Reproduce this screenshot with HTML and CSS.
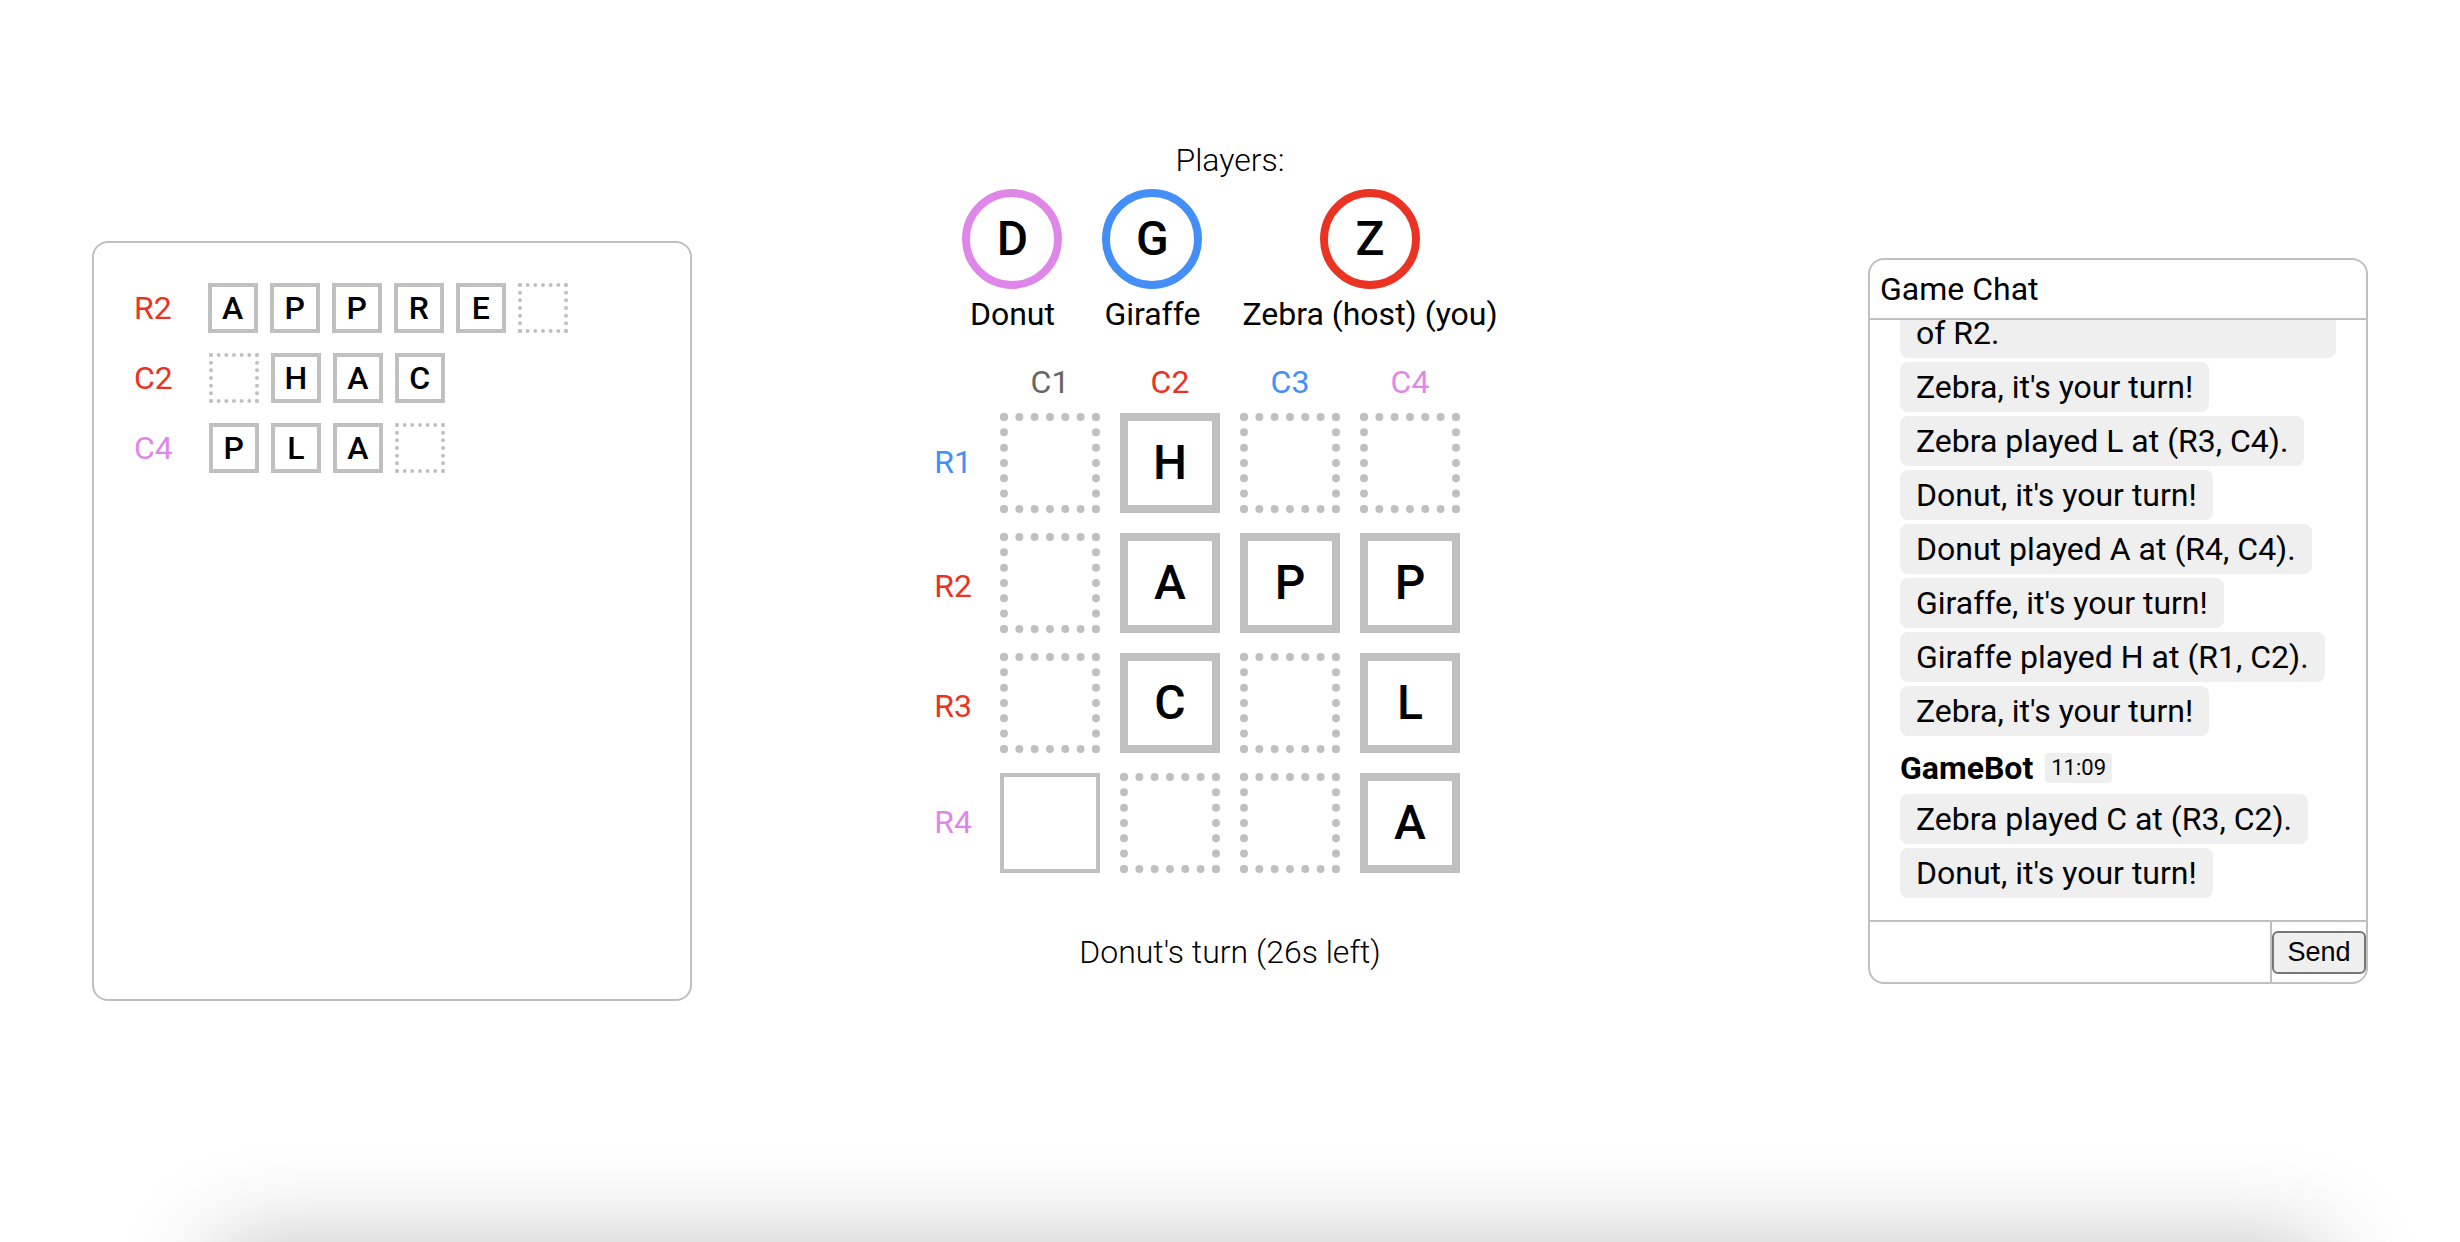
FILE: index.html
```html
<!DOCTYPE html>
<html lang="en">
<head>
<meta charset="utf-8">
<title>Word Grid</title>
<link rel="stylesheet" href="styles.css">
</head>
<body>
<main class="game">
  <section class="words" aria-label="Words">
    <div class="word">
      <span class="label red">R2</span>
      <span class="tile small">A</span><span class="tile small">P</span><span class="tile small">P</span><span class="tile small">R</span><span class="tile small">E</span><span class="tile small empty"></span>
    </div>
    <div class="word">
      <span class="label red">C2</span>
      <span class="tile small empty"></span><span class="tile small">H</span><span class="tile small">A</span><span class="tile small">C</span>
    </div>
    <div class="word">
      <span class="label violet">C4</span>
      <span class="tile small">P</span><span class="tile small">L</span><span class="tile small">A</span><span class="tile small empty"></span>
    </div>
  </section>

  <section class="table">
    <div class="caption">Players:</div>
    <div class="players">
      <div class="player"><span class="avatar violet"><span class="initial">D</span></span><span>Donut</span></div>
      <div class="player"><span class="avatar blue"><span class="initial">G</span></span><span>Giraffe</span></div>
      <div class="player"><span class="avatar red"><span class="initial">Z</span></span><span>Zebra (host) (you)</span></div>
    </div>
    <div class="board">
      <div class="columns">
        <span class="grey">C1</span><span class="red">C2</span><span class="blue">C3</span><span class="violet">C4</span>
      </div>
      <div class="rows">
        <span class="blue">R1</span><span class="red">R2</span><span class="red">R3</span><span class="violet">R4</span>
      </div>
      <div class="tiles">
        <span class="tile empty"></span><span class="tile">H</span><span class="tile empty"></span><span class="tile empty"></span>
        <span class="tile empty"></span><span class="tile">A</span><span class="tile">P</span><span class="tile">P</span>
        <span class="tile empty"></span><span class="tile">C</span><span class="tile empty"></span><span class="tile">L</span>
        <span class="tile open"></span><span class="tile empty"></span><span class="tile empty"></span><span class="tile">A</span>
      </div>
    </div>
    <div class="caption">Donut's turn (26s left)</div>
  </section>

  <section class="chat">
    <header class="chat-title">Game Chat</header>
    <div class="messages">
      <p class="bubble wide">of R2.</p>
      <p class="bubble">Zebra, it's your turn!</p>
      <p class="bubble">Zebra played L at (R3, C4).</p>
      <p class="bubble">Donut, it's your turn!</p>
      <p class="bubble">Donut played A at (R4, C4).</p>
      <p class="bubble">Giraffe, it's your turn!</p>
      <p class="bubble">Giraffe played H at (R1, C2).</p>
      <p class="bubble">Zebra, it's your turn!</p>
      <div class="sender"><strong>GameBot</strong><time class="time">11:09</time></div>
      <p class="bubble">Zebra played C at (R3, C2).</p>
      <p class="bubble">Donut, it's your turn!</p>
    </div>
    <form class="compose">
      <input class="entry" type="text" aria-label="Message">
      <button class="send" type="button">Send</button>
    </form>
  </section>
</main>
<div class="drawer"></div>
</body>
</html>
```

FILE: styles.css
```css
* {
  box-sizing: border-box;
}

body {
  margin: 0;
  background: #fff;
  color: #000;
  font-family: Roboto, "Liberation Sans", sans-serif;
  font-size: 32px;
  line-height: 38px;
  overflow: hidden;
}

.red { color: #ea3323; }
.blue { color: #448ef7; }
.violet { color: #df87e8; }
.grey { color: #666; }

.game {
  min-height: 100vh;
  padding: 0 92px;
  display: grid;
  grid-template-columns: 1fr auto 1fr;
  align-items: center;
}

/* Word list */
.words {
  width: 600px;
  height: 760px;
  padding: 40px;
  border: 2px solid #c0c0c0;
  border-radius: 16px;
  display: flex;
  flex-direction: column;
  gap: 20px;
}

.word {
  display: flex;
  align-items: center;
  gap: 12px;
}

.label {
  margin-right: 24px;
}

.tile {
  width: 100px;
  height: 100px;
  border: 8px solid #c0c0c0;
  display: flex;
  align-items: center;
  justify-content: center;
  font-size: 48px;
  font-weight: 500;
}

.tile.small {
  width: 50px;
  height: 50px;
  border-width: 4px;
  font-size: 32px;
}

.tile.empty { border-style: dotted; }
.tile.open { border-width: 4px; }

/* Players and board */
.table {
  padding-bottom: 130px;
  display: flex;
  flex-direction: column;
  align-items: center;
}

.caption { font-weight: 300; }

.players {
  margin: 10px 0 30px;
  display: flex;
  gap: 40px;
}

.player {
  display: flex;
  flex-direction: column;
  align-items: center;
  gap: 6px;
}

.avatar {
  width: 100px;
  height: 100px;
  border: 8px solid currentColor;
  border-radius: 50%;
  display: flex;
  align-items: center;
  justify-content: center;
}

.initial {
  color: #000;
  font-size: 48px;
  font-weight: 500;
}

.board {
  margin-bottom: 60px;
  display: grid;
  grid-template-columns: 1fr auto 1fr;
  row-gap: 12px;
}

.columns {
  grid-column: 2;
  display: grid;
  grid-template-columns: repeat(4, 100px);
  gap: 20px;
  text-align: center;
}

.rows {
  grid-column: 1;
  padding: 30px 28px 0 0;
  display: grid;
  grid-template-rows: 124px 120px 116px;
}

.tiles {
  grid-column: 2;
  display: grid;
  grid-template-columns: repeat(4, 100px);
  gap: 20px;
}

/* Chat */
.chat {
  justify-self: end;
  width: 500px;
  height: 726px;
  border: 2px solid #c0c0c0;
  border-radius: 16px;
  display: flex;
  flex-direction: column;
}

.chat-title {
  padding: 10px;
  border-bottom: 2px solid #c0c0c0;
}

.messages {
  flex: 1;
  min-height: 0;
  padding: 0 30px 22px;
  overflow: hidden;
  display: flex;
  flex-direction: column;
  justify-content: flex-end;
  align-items: flex-start;
  gap: 4px;
}

.bubble {
  flex-shrink: 0;
  margin: 0;
  padding: 6px 16px;
  border-radius: 8px;
  background: #efefef;
}

.bubble.wide { align-self: stretch; }

.sender {
  flex-shrink: 0;
  height: 50px;
  padding-top: 6px;
  display: flex;
  align-items: center;
  gap: 12px;
}

.time {
  padding: 0 6px;
  border-radius: 4px;
  background: #efefef;
  font-size: 22px;
  line-height: 30px;
}

.compose {
  height: 62px;
  border-top: 2px solid #c0c0c0;
  display: flex;
  align-items: center;
}

.entry {
  flex: 1;
  min-width: 0;
  align-self: stretch;
  border: 0;
  border-right: 2px solid #c0c0c0;
  border-radius: 0 0 0 14px;
  background: none;
  font: inherit;
  outline: 0;
}

.send {
  width: 94px;
  height: 43px;
  padding: 0;
  border: 2px solid #767676;
  border-radius: 6px;
  background: #efefef;
  color: #000;
  font-family: "Liberation Sans", Arial, sans-serif;
  font-size: 27px;
  line-height: 30px;
}

/* Closed drawer just below the fold; only its shadow shows */
.drawer {
  position: fixed;
  top: 100%;
  left: 216px;
  right: 136px;
  height: 300px;
  box-shadow: 0 0 90px rgba(0, 0, 0, 0.24);
}
```
